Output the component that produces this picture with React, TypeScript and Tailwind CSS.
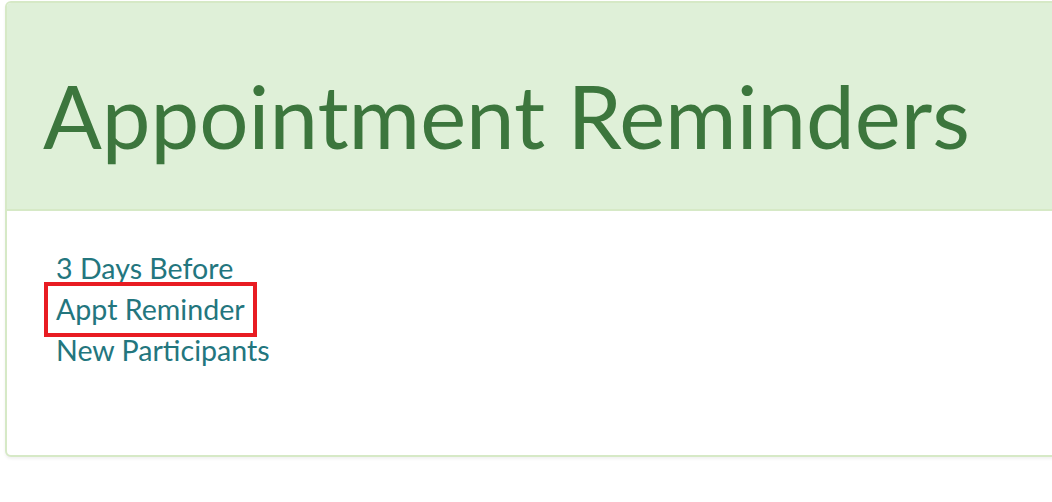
import React from "react";

export default function App() {
  return (
    <div className="w-[1052px] h-[502px] overflow-hidden bg-white" style={{ fontFamily: "Lato, 'Open Sans', sans-serif" }}>
      <div className="ml-[5px] mt-[1px] w-[1100px] h-[456px] border-2 border-[#d6e9c6] rounded-[6px] bg-white shadow-[0_2px_3px_rgba(0,0,0,0.06)] flex flex-col overflow-hidden">
        <div className="h-[208px] bg-[#dff0d8] border-b-2 border-[#d6e9c6] flex items-center pl-[36px] pt-[18px]">
          <h1 className="text-[87px] leading-none text-[#3c763d] font-normal">Appointment Reminders</h1>
        </div>
        <div className="pl-[49px] pt-[37px] flex flex-col">
          <a className="text-[28.6px] leading-[41px] text-[#23767e] w-fit">3 Days Before</a>
          <a className="text-[28.6px] leading-[41px] text-[#23767e] w-fit px-[8px] -mx-[8px] py-[3px] -my-[3px] outline outline-4 outline-[#e81c22]">Appt Reminder</a>
          <a className="text-[28.6px] leading-[41px] text-[#23767e] w-fit">New Participants</a>
        </div>
      </div>
    </div>
  );
}
